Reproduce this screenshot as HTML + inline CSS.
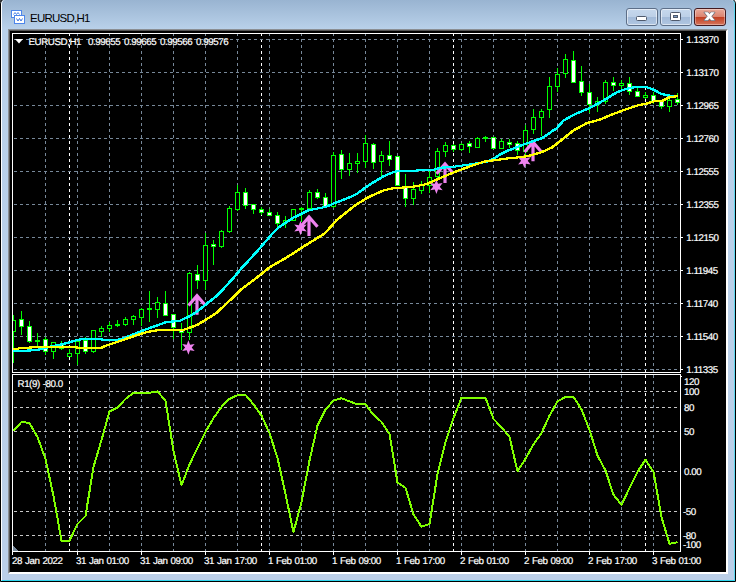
<!DOCTYPE html>
<html><head><meta charset="utf-8"><title>EURUSD,H1</title>
<style>
html,body{margin:0;padding:0;background:#fff;}
body{width:738px;height:582px;position:relative;overflow:hidden;font-family:"Liberation Sans",sans-serif;}
.win{position:absolute;left:0;top:-2px;width:734px;height:582px;border:1px solid #000;border-radius:6px 6px 0 0;
 background:linear-gradient(to bottom,#99b4d1 1px,#b9d1ea 30px,#b9d1ea 40px,#bbcfe8 100%);overflow:hidden;}
.hl{position:absolute;left:0;top:0;width:732px;height:580px;border:1px solid #fff;border-right-color:#5fd8f0;border-bottom-color:#2fd5ee;border-radius:5px 5px 0 0;border-top-color:#c5d6e8;}
.edge{position:absolute;left:8px;top:29px;width:716px;height:541px;border:2px solid;border-color:#8b8f94 #fff #fff #8b8f94;}
.edge2{position:absolute;left:9px;top:30px;width:716px;height:541px;border:1px solid;border-color:#555 #fff #fff #555;}
.title{position:absolute;left:30px;top:10.5px;font-size:11.5px;line-height:14px;color:#000;letter-spacing:-0.75px;white-space:nowrap;}
.t{position:absolute;font-size:9.8px;line-height:11px;color:#fff;white-space:nowrap;letter-spacing:-0.45px;word-spacing:0.7px;-webkit-text-stroke:0.2px #fff;text-rendering:geometricPrecision;}
.btn{position:absolute;top:8px;width:30px;height:16px;border:1px solid #5d6f88;border-radius:3px;
 background:linear-gradient(to bottom,#c6d8ed 0,#bdd0e7 48%,#a3bbd9 52%,#b0c6e1 100%);box-shadow:inset 0 0 0 1px rgba(255,255,255,.55);}
.close{border-color:#431a20;background:linear-gradient(to bottom,#e9aa9a 0,#dc8470 48%,#c23f22 52%,#d5755c 100%);box-shadow:inset 0 0 0 1px rgba(255,255,255,.35);}
</style></head><body>
<div style="position:absolute;left:0;top:0;width:2px;height:2px;background:#444"></div><div class="win"><div class="hl"></div></div>
<div class="edge"></div><div class="edge2"></div>
<svg width="16" height="16" viewBox="0 0 16 16" style="position:absolute;left:10px;top:9px">
<rect x="1.5" y="1.5" width="10" height="7" fill="#fff" stroke="#4d86ea"/>
<path d="M3.5,5.5 L5,3.5 L6.5,5.5 L8,3.5 L9.5,5.5" fill="none" stroke="#4d86ea" stroke-width="1"/>
<rect x="4.5" y="6.5" width="10" height="8" fill="#fff" stroke="#4d86ea"/>
<path d="M6.5,9.5 L8,12 L9.5,9.5 L11,12 L12.5,9.5" fill="none" stroke="#3c74e0" stroke-width="1"/>
</svg>
<div class="title">EURUSD,H1</div>
<div class="btn" style="left:626px"><svg width="30" height="16" style="position:absolute;left:0;top:0"><rect x="9.5" y="7.5" width="10" height="4" rx="1" fill="#fff" stroke="#4f5a6d"/></svg></div>
<div class="btn" style="left:660px"><svg width="30" height="16" style="position:absolute;left:0;top:0"><rect x="9.5" y="3.5" width="10" height="8" rx="1" fill="#fff" stroke="#4f5a6d"/><rect x="12.5" y="6.5" width="4" height="2" fill="#7d9cc4" stroke="#4f5a6d" stroke-width="1"/></svg></div>
<div class="btn close" style="left:694px"><svg width="30" height="16" style="position:absolute;left:0;top:0"><g fill="#fff" stroke="#666b78" stroke-width="1.3" stroke-linejoin="round"><polygon points="9.3,3.3 12.9,3.3 19.7,11.3 16.1,11.3"/><polygon points="16.1,3.3 19.7,3.3 12.9,11.3 9.3,11.3"/></g><g fill="#fff"><polygon points="9.3,3.3 12.9,3.3 19.7,11.3 16.1,11.3"/><polygon points="16.1,3.3 19.7,3.3 12.9,11.3 9.3,11.3"/></g></svg></div>
<svg width="738" height="582" viewBox="0 0 738 582" style="position:absolute;left:0;top:0">
<rect x="10" y="31" width="716" height="541" fill="#000"/>
<g shape-rendering="crispEdges">
<defs><clipPath id="cm"><rect x="13" y="34" width="667" height="338"/></clipPath><clipPath id="cs"><rect x="13" y="375" width="667" height="176"/></clipPath></defs>
<line x1="45.5" y1="34" x2="45.5" y2="372" stroke="#778899" stroke-dasharray="3 3" stroke-dashoffset="1"/>
<line x1="45.5" y1="375" x2="45.5" y2="551" stroke="#778899" stroke-dasharray="3 3" stroke-dashoffset="0"/>
<line x1="77.5" y1="34" x2="77.5" y2="372" stroke="#778899" stroke-dasharray="3 3" stroke-dashoffset="1"/>
<line x1="77.5" y1="375" x2="77.5" y2="551" stroke="#778899" stroke-dasharray="3 3" stroke-dashoffset="0"/>
<line x1="109.5" y1="34" x2="109.5" y2="372" stroke="#778899" stroke-dasharray="3 3" stroke-dashoffset="1"/>
<line x1="109.5" y1="375" x2="109.5" y2="551" stroke="#778899" stroke-dasharray="3 3" stroke-dashoffset="0"/>
<line x1="141.5" y1="34" x2="141.5" y2="372" stroke="#778899" stroke-dasharray="3 3" stroke-dashoffset="1"/>
<line x1="141.5" y1="375" x2="141.5" y2="551" stroke="#778899" stroke-dasharray="3 3" stroke-dashoffset="0"/>
<line x1="173.5" y1="34" x2="173.5" y2="372" stroke="#778899" stroke-dasharray="3 3" stroke-dashoffset="1"/>
<line x1="173.5" y1="375" x2="173.5" y2="551" stroke="#778899" stroke-dasharray="3 3" stroke-dashoffset="0"/>
<line x1="205.5" y1="34" x2="205.5" y2="372" stroke="#778899" stroke-dasharray="3 3" stroke-dashoffset="1"/>
<line x1="205.5" y1="375" x2="205.5" y2="551" stroke="#778899" stroke-dasharray="3 3" stroke-dashoffset="0"/>
<line x1="237.5" y1="34" x2="237.5" y2="372" stroke="#778899" stroke-dasharray="3 3" stroke-dashoffset="1"/>
<line x1="237.5" y1="375" x2="237.5" y2="551" stroke="#778899" stroke-dasharray="3 3" stroke-dashoffset="0"/>
<line x1="269.5" y1="34" x2="269.5" y2="372" stroke="#778899" stroke-dasharray="3 3" stroke-dashoffset="1"/>
<line x1="269.5" y1="375" x2="269.5" y2="551" stroke="#778899" stroke-dasharray="3 3" stroke-dashoffset="0"/>
<line x1="301.5" y1="34" x2="301.5" y2="372" stroke="#778899" stroke-dasharray="3 3" stroke-dashoffset="1"/>
<line x1="301.5" y1="375" x2="301.5" y2="551" stroke="#778899" stroke-dasharray="3 3" stroke-dashoffset="0"/>
<line x1="333.5" y1="34" x2="333.5" y2="372" stroke="#778899" stroke-dasharray="3 3" stroke-dashoffset="1"/>
<line x1="333.5" y1="375" x2="333.5" y2="551" stroke="#778899" stroke-dasharray="3 3" stroke-dashoffset="0"/>
<line x1="365.5" y1="34" x2="365.5" y2="372" stroke="#778899" stroke-dasharray="3 3" stroke-dashoffset="1"/>
<line x1="365.5" y1="375" x2="365.5" y2="551" stroke="#778899" stroke-dasharray="3 3" stroke-dashoffset="0"/>
<line x1="397.5" y1="34" x2="397.5" y2="372" stroke="#778899" stroke-dasharray="3 3" stroke-dashoffset="1"/>
<line x1="397.5" y1="375" x2="397.5" y2="551" stroke="#778899" stroke-dasharray="3 3" stroke-dashoffset="0"/>
<line x1="429.5" y1="34" x2="429.5" y2="372" stroke="#778899" stroke-dasharray="3 3" stroke-dashoffset="1"/>
<line x1="429.5" y1="375" x2="429.5" y2="551" stroke="#778899" stroke-dasharray="3 3" stroke-dashoffset="0"/>
<line x1="461.5" y1="34" x2="461.5" y2="372" stroke="#778899" stroke-dasharray="3 3" stroke-dashoffset="1"/>
<line x1="461.5" y1="375" x2="461.5" y2="551" stroke="#778899" stroke-dasharray="3 3" stroke-dashoffset="0"/>
<line x1="493.5" y1="34" x2="493.5" y2="372" stroke="#778899" stroke-dasharray="3 3" stroke-dashoffset="1"/>
<line x1="493.5" y1="375" x2="493.5" y2="551" stroke="#778899" stroke-dasharray="3 3" stroke-dashoffset="0"/>
<line x1="525.5" y1="34" x2="525.5" y2="372" stroke="#778899" stroke-dasharray="3 3" stroke-dashoffset="1"/>
<line x1="525.5" y1="375" x2="525.5" y2="551" stroke="#778899" stroke-dasharray="3 3" stroke-dashoffset="0"/>
<line x1="557.5" y1="34" x2="557.5" y2="372" stroke="#778899" stroke-dasharray="3 3" stroke-dashoffset="1"/>
<line x1="557.5" y1="375" x2="557.5" y2="551" stroke="#778899" stroke-dasharray="3 3" stroke-dashoffset="0"/>
<line x1="589.5" y1="34" x2="589.5" y2="372" stroke="#778899" stroke-dasharray="3 3" stroke-dashoffset="1"/>
<line x1="589.5" y1="375" x2="589.5" y2="551" stroke="#778899" stroke-dasharray="3 3" stroke-dashoffset="0"/>
<line x1="621.5" y1="34" x2="621.5" y2="372" stroke="#778899" stroke-dasharray="3 3" stroke-dashoffset="1"/>
<line x1="621.5" y1="375" x2="621.5" y2="551" stroke="#778899" stroke-dasharray="3 3" stroke-dashoffset="0"/>
<line x1="653.5" y1="34" x2="653.5" y2="372" stroke="#778899" stroke-dasharray="3 3" stroke-dashoffset="1"/>
<line x1="653.5" y1="375" x2="653.5" y2="551" stroke="#778899" stroke-dasharray="3 3" stroke-dashoffset="0"/>
<line x1="69.5" y1="34" x2="69.5" y2="372" stroke="#fff" stroke-dasharray="3 3" stroke-dashoffset="1"/>
<line x1="69.5" y1="375" x2="69.5" y2="551" stroke="#fff" stroke-dasharray="3 3" stroke-dashoffset="0"/>
<line x1="261.5" y1="34" x2="261.5" y2="372" stroke="#fff" stroke-dasharray="3 3" stroke-dashoffset="1"/>
<line x1="261.5" y1="375" x2="261.5" y2="551" stroke="#fff" stroke-dasharray="3 3" stroke-dashoffset="0"/>
<line x1="453.5" y1="34" x2="453.5" y2="372" stroke="#fff" stroke-dasharray="3 3" stroke-dashoffset="1"/>
<line x1="453.5" y1="375" x2="453.5" y2="551" stroke="#fff" stroke-dasharray="3 3" stroke-dashoffset="0"/>
<line x1="645.5" y1="34" x2="645.5" y2="372" stroke="#fff" stroke-dasharray="3 3" stroke-dashoffset="1"/>
<line x1="645.5" y1="375" x2="645.5" y2="551" stroke="#fff" stroke-dasharray="3 3" stroke-dashoffset="0"/>
<line x1="13" y1="39.5" x2="680" y2="39.5" stroke="#778899" stroke-dasharray="3 3" stroke-dashoffset="5"/>
<line x1="13" y1="72.5" x2="680" y2="72.5" stroke="#778899" stroke-dasharray="3 3" stroke-dashoffset="5"/>
<line x1="13" y1="105.5" x2="680" y2="105.5" stroke="#778899" stroke-dasharray="3 3" stroke-dashoffset="5"/>
<line x1="13" y1="138.5" x2="680" y2="138.5" stroke="#778899" stroke-dasharray="3 3" stroke-dashoffset="5"/>
<line x1="13" y1="171.5" x2="680" y2="171.5" stroke="#778899" stroke-dasharray="3 3" stroke-dashoffset="5"/>
<line x1="13" y1="204.5" x2="680" y2="204.5" stroke="#778899" stroke-dasharray="3 3" stroke-dashoffset="5"/>
<line x1="13" y1="237.5" x2="680" y2="237.5" stroke="#778899" stroke-dasharray="3 3" stroke-dashoffset="5"/>
<line x1="13" y1="270.5" x2="680" y2="270.5" stroke="#778899" stroke-dasharray="3 3" stroke-dashoffset="5"/>
<line x1="13" y1="303.5" x2="680" y2="303.5" stroke="#778899" stroke-dasharray="3 3" stroke-dashoffset="5"/>
<line x1="13" y1="336.5" x2="680" y2="336.5" stroke="#778899" stroke-dasharray="3 3" stroke-dashoffset="5"/>
<line x1="13" y1="369.5" x2="680" y2="369.5" stroke="#778899" stroke-dasharray="3 3" stroke-dashoffset="5"/>
<line x1="13" y1="391.5" x2="680" y2="391.5" stroke="#c8c8c8" stroke-dasharray="3 3" stroke-dashoffset="5"/>
<line x1="13" y1="407.5" x2="680" y2="407.5" stroke="#c8c8c8" stroke-dasharray="3 3" stroke-dashoffset="5"/>
<line x1="13" y1="431.5" x2="680" y2="431.5" stroke="#c8c8c8" stroke-dasharray="3 3" stroke-dashoffset="5"/>
<line x1="13" y1="471.5" x2="680" y2="471.5" stroke="#c8c8c8" stroke-dasharray="3 3" stroke-dashoffset="5"/>
<line x1="13" y1="511.5" x2="680" y2="511.5" stroke="#c8c8c8" stroke-dasharray="3 3" stroke-dashoffset="5"/>
<line x1="13" y1="535.5" x2="680" y2="535.5" stroke="#c8c8c8" stroke-dasharray="3 3" stroke-dashoffset="5"/>
<rect x="12" y="33" width="1" height="340" fill="#fff"/>
<rect x="12" y="33" width="669" height="1" fill="#fff"/>
<rect x="680" y="33" width="1" height="340" fill="#fff"/>
<rect x="12" y="372" width="669" height="1" fill="#fff"/>
<rect x="12" y="374" width="669" height="1" fill="#fff"/>
<rect x="12" y="374" width="1" height="181" fill="#fff"/>
<rect x="680" y="374" width="1" height="178" fill="#fff"/>
<rect x="12" y="551" width="669" height="1" fill="#fff"/>
<rect x="681" y="39" width="2" height="1" fill="#fff"/>
<rect x="681" y="72" width="2" height="1" fill="#fff"/>
<rect x="681" y="105" width="2" height="1" fill="#fff"/>
<rect x="681" y="138" width="2" height="1" fill="#fff"/>
<rect x="681" y="171" width="2" height="1" fill="#fff"/>
<rect x="681" y="204" width="2" height="1" fill="#fff"/>
<rect x="681" y="237" width="2" height="1" fill="#fff"/>
<rect x="681" y="270" width="2" height="1" fill="#fff"/>
<rect x="681" y="303" width="2" height="1" fill="#fff"/>
<rect x="681" y="336" width="2" height="1" fill="#fff"/>
<rect x="681" y="369" width="2" height="1" fill="#fff"/>
<rect x="681" y="376" width="1" height="1" fill="#fff"/>
<rect x="77" y="552" width="1" height="3" fill="#fff"/>
<rect x="141" y="552" width="1" height="3" fill="#fff"/>
<rect x="205" y="552" width="1" height="3" fill="#fff"/>
<rect x="269" y="552" width="1" height="3" fill="#fff"/>
<rect x="333" y="552" width="1" height="3" fill="#fff"/>
<rect x="397" y="552" width="1" height="3" fill="#fff"/>
<rect x="461" y="552" width="1" height="3" fill="#fff"/>
<rect x="525" y="552" width="1" height="3" fill="#fff"/>
<rect x="589" y="552" width="1" height="3" fill="#fff"/>
<rect x="653" y="552" width="1" height="3" fill="#fff"/>
<polygon points="13,546 18,551 13,551" fill="#778899"/>
<g clip-path="url(#cm)">
<rect x="13" y="315" width="1" height="48" fill="#0f0"/>
<rect x="11" y="320" width="5" height="12" fill="#0f0"/>
<rect x="12" y="321" width="3" height="10" fill="#000"/>
<rect x="21" y="311" width="1" height="24" fill="#0f0"/>
<rect x="19" y="319" width="5" height="8" fill="#0f0"/>
<rect x="20" y="320" width="3" height="6" fill="#fff"/>
<rect x="29" y="321" width="1" height="22" fill="#0f0"/>
<rect x="27" y="326" width="5" height="16" fill="#0f0"/>
<rect x="28" y="327" width="3" height="14" fill="#fff"/>
<rect x="37" y="333" width="1" height="15" fill="#0f0"/>
<rect x="35" y="340" width="5" height="2" fill="#0f0"/>
<rect x="45" y="337" width="1" height="18" fill="#0f0"/>
<rect x="43" y="339" width="5" height="13" fill="#0f0"/>
<rect x="44" y="340" width="3" height="11" fill="#fff"/>
<rect x="53" y="342" width="1" height="17" fill="#0f0"/>
<rect x="51" y="342" width="5" height="10" fill="#0f0"/>
<rect x="52" y="343" width="3" height="8" fill="#000"/>
<rect x="61" y="341" width="1" height="9" fill="#0f0"/>
<rect x="59" y="344" width="5" height="5" fill="#0f0"/>
<rect x="60" y="345" width="3" height="3" fill="#fff"/>
<rect x="69" y="349" width="1" height="8" fill="#0f0"/>
<rect x="67" y="353" width="5" height="4" fill="#0f0"/>
<rect x="68" y="354" width="3" height="2" fill="#000"/>
<rect x="77" y="341" width="1" height="24" fill="#0f0"/>
<rect x="75" y="341" width="5" height="13" fill="#0f0"/>
<rect x="76" y="342" width="3" height="11" fill="#000"/>
<rect x="85" y="337" width="1" height="17" fill="#0f0"/>
<rect x="83" y="340" width="5" height="12" fill="#0f0"/>
<rect x="84" y="341" width="3" height="10" fill="#fff"/>
<rect x="93" y="330" width="1" height="23" fill="#0f0"/>
<rect x="91" y="330" width="5" height="22" fill="#0f0"/>
<rect x="92" y="331" width="3" height="20" fill="#000"/>
<rect x="101" y="326" width="1" height="11" fill="#0f0"/>
<rect x="99" y="328" width="5" height="4" fill="#0f0"/>
<rect x="100" y="329" width="3" height="2" fill="#000"/>
<rect x="109" y="322" width="1" height="10" fill="#0f0"/>
<rect x="107" y="325" width="5" height="4" fill="#0f0"/>
<rect x="108" y="326" width="3" height="2" fill="#000"/>
<rect x="117" y="320" width="1" height="7" fill="#0f0"/>
<rect x="115" y="324" width="5" height="2" fill="#0f0"/>
<rect x="125" y="317" width="1" height="9" fill="#0f0"/>
<rect x="123" y="319" width="5" height="6" fill="#0f0"/>
<rect x="124" y="320" width="3" height="4" fill="#000"/>
<rect x="133" y="315" width="1" height="10" fill="#0f0"/>
<rect x="131" y="316" width="5" height="4" fill="#0f0"/>
<rect x="132" y="317" width="3" height="2" fill="#000"/>
<rect x="141" y="308" width="1" height="18" fill="#0f0"/>
<rect x="139" y="309" width="5" height="9" fill="#0f0"/>
<rect x="140" y="310" width="3" height="7" fill="#000"/>
<rect x="149" y="291" width="1" height="31" fill="#0f0"/>
<rect x="147" y="308" width="5" height="2" fill="#0f0"/>
<rect x="157" y="297" width="1" height="21" fill="#0f0"/>
<rect x="155" y="302" width="5" height="8" fill="#0f0"/>
<rect x="156" y="303" width="3" height="6" fill="#000"/>
<rect x="165" y="291" width="1" height="25" fill="#0f0"/>
<rect x="163" y="303" width="5" height="13" fill="#0f0"/>
<rect x="164" y="304" width="3" height="11" fill="#fff"/>
<rect x="173" y="314" width="1" height="25" fill="#0f0"/>
<rect x="171" y="314" width="5" height="14" fill="#0f0"/>
<rect x="172" y="315" width="3" height="12" fill="#fff"/>
<rect x="181" y="323" width="1" height="27" fill="#0f0"/>
<rect x="179" y="329" width="5" height="4" fill="#0f0"/>
<rect x="180" y="330" width="3" height="2" fill="#fff"/>
<rect x="189" y="272" width="1" height="68" fill="#0f0"/>
<rect x="187" y="273" width="5" height="60" fill="#0f0"/>
<rect x="188" y="274" width="3" height="58" fill="#000"/>
<rect x="197" y="265" width="1" height="24" fill="#0f0"/>
<rect x="195" y="274" width="5" height="7" fill="#0f0"/>
<rect x="196" y="275" width="3" height="5" fill="#fff"/>
<rect x="205" y="233" width="1" height="57" fill="#0f0"/>
<rect x="203" y="245" width="5" height="36" fill="#0f0"/>
<rect x="204" y="246" width="3" height="34" fill="#000"/>
<rect x="213" y="240" width="1" height="25" fill="#0f0"/>
<rect x="211" y="244" width="5" height="3" fill="#0f0"/>
<rect x="212" y="245" width="3" height="1" fill="#fff"/>
<rect x="221" y="230" width="1" height="18" fill="#0f0"/>
<rect x="219" y="231" width="5" height="16" fill="#0f0"/>
<rect x="220" y="232" width="3" height="14" fill="#000"/>
<rect x="229" y="206" width="1" height="27" fill="#0f0"/>
<rect x="227" y="208" width="5" height="24" fill="#0f0"/>
<rect x="228" y="209" width="3" height="22" fill="#000"/>
<rect x="237" y="185" width="1" height="26" fill="#0f0"/>
<rect x="235" y="192" width="5" height="18" fill="#0f0"/>
<rect x="236" y="193" width="3" height="16" fill="#000"/>
<rect x="245" y="188" width="1" height="21" fill="#0f0"/>
<rect x="243" y="192" width="5" height="14" fill="#0f0"/>
<rect x="244" y="193" width="3" height="12" fill="#fff"/>
<rect x="253" y="204" width="1" height="10" fill="#0f0"/>
<rect x="251" y="204" width="5" height="6" fill="#0f0"/>
<rect x="252" y="205" width="3" height="4" fill="#fff"/>
<rect x="261" y="207" width="1" height="8" fill="#0f0"/>
<rect x="259" y="209" width="5" height="4" fill="#0f0"/>
<rect x="260" y="210" width="3" height="2" fill="#fff"/>
<rect x="269" y="209" width="1" height="7" fill="#0f0"/>
<rect x="267" y="212" width="5" height="4" fill="#0f0"/>
<rect x="268" y="213" width="3" height="2" fill="#fff"/>
<rect x="277" y="212" width="1" height="16" fill="#0f0"/>
<rect x="275" y="215" width="5" height="9" fill="#0f0"/>
<rect x="276" y="216" width="3" height="7" fill="#fff"/>
<rect x="285" y="216" width="1" height="12" fill="#0f0"/>
<rect x="283" y="220" width="5" height="3" fill="#0f0"/>
<rect x="284" y="221" width="3" height="1" fill="#000"/>
<rect x="293" y="209" width="1" height="12" fill="#0f0"/>
<rect x="291" y="209" width="5" height="12" fill="#0f0"/>
<rect x="292" y="210" width="3" height="10" fill="#000"/>
<rect x="301" y="207" width="1" height="15" fill="#0f0"/>
<rect x="299" y="208" width="5" height="2" fill="#0f0"/>
<rect x="309" y="190" width="1" height="19" fill="#0f0"/>
<rect x="307" y="192" width="5" height="17" fill="#0f0"/>
<rect x="308" y="193" width="3" height="15" fill="#000"/>
<rect x="317" y="189" width="1" height="10" fill="#0f0"/>
<rect x="315" y="192" width="5" height="6" fill="#0f0"/>
<rect x="316" y="193" width="3" height="4" fill="#fff"/>
<rect x="325" y="193" width="1" height="15" fill="#0f0"/>
<rect x="323" y="197" width="5" height="10" fill="#0f0"/>
<rect x="324" y="198" width="3" height="8" fill="#fff"/>
<rect x="333" y="152" width="1" height="56" fill="#0f0"/>
<rect x="331" y="155" width="5" height="52" fill="#0f0"/>
<rect x="332" y="156" width="3" height="50" fill="#000"/>
<rect x="341" y="150" width="1" height="29" fill="#0f0"/>
<rect x="339" y="154" width="5" height="16" fill="#0f0"/>
<rect x="340" y="155" width="3" height="14" fill="#fff"/>
<rect x="349" y="153" width="1" height="23" fill="#0f0"/>
<rect x="347" y="163" width="5" height="7" fill="#0f0"/>
<rect x="348" y="164" width="3" height="5" fill="#000"/>
<rect x="357" y="153" width="1" height="20" fill="#0f0"/>
<rect x="355" y="161" width="5" height="3" fill="#0f0"/>
<rect x="356" y="162" width="3" height="1" fill="#000"/>
<rect x="365" y="135" width="1" height="33" fill="#0f0"/>
<rect x="363" y="143" width="5" height="19" fill="#0f0"/>
<rect x="364" y="144" width="3" height="17" fill="#000"/>
<rect x="373" y="143" width="1" height="26" fill="#0f0"/>
<rect x="371" y="144" width="5" height="19" fill="#0f0"/>
<rect x="372" y="145" width="3" height="17" fill="#fff"/>
<rect x="381" y="151" width="1" height="25" fill="#0f0"/>
<rect x="379" y="155" width="5" height="7" fill="#0f0"/>
<rect x="380" y="156" width="3" height="5" fill="#000"/>
<rect x="389" y="141" width="1" height="25" fill="#0f0"/>
<rect x="387" y="155" width="5" height="5" fill="#0f0"/>
<rect x="388" y="156" width="3" height="3" fill="#fff"/>
<rect x="397" y="156" width="1" height="30" fill="#0f0"/>
<rect x="395" y="156" width="5" height="30" fill="#0f0"/>
<rect x="396" y="157" width="3" height="28" fill="#fff"/>
<rect x="405" y="174" width="1" height="33" fill="#0f0"/>
<rect x="403" y="186" width="5" height="13" fill="#0f0"/>
<rect x="404" y="187" width="3" height="11" fill="#fff"/>
<rect x="413" y="182" width="1" height="23" fill="#0f0"/>
<rect x="411" y="189" width="5" height="10" fill="#0f0"/>
<rect x="412" y="190" width="3" height="8" fill="#000"/>
<rect x="421" y="181" width="1" height="13" fill="#0f0"/>
<rect x="419" y="185" width="5" height="6" fill="#0f0"/>
<rect x="420" y="186" width="3" height="4" fill="#000"/>
<rect x="429" y="169" width="1" height="24" fill="#0f0"/>
<rect x="427" y="177" width="5" height="9" fill="#0f0"/>
<rect x="428" y="178" width="3" height="7" fill="#000"/>
<rect x="437" y="148" width="1" height="30" fill="#0f0"/>
<rect x="435" y="151" width="5" height="26" fill="#0f0"/>
<rect x="436" y="152" width="3" height="24" fill="#000"/>
<rect x="445" y="142" width="1" height="15" fill="#0f0"/>
<rect x="443" y="145" width="5" height="7" fill="#0f0"/>
<rect x="444" y="146" width="3" height="5" fill="#000"/>
<rect x="453" y="144" width="1" height="8" fill="#0f0"/>
<rect x="451" y="145" width="5" height="5" fill="#0f0"/>
<rect x="452" y="146" width="3" height="3" fill="#fff"/>
<rect x="461" y="143" width="1" height="8" fill="#0f0"/>
<rect x="459" y="144" width="5" height="6" fill="#0f0"/>
<rect x="460" y="145" width="3" height="4" fill="#000"/>
<rect x="469" y="141" width="1" height="12" fill="#0f0"/>
<rect x="467" y="143" width="5" height="4" fill="#0f0"/>
<rect x="468" y="144" width="3" height="2" fill="#fff"/>
<rect x="477" y="137" width="1" height="11" fill="#0f0"/>
<rect x="475" y="138" width="5" height="10" fill="#0f0"/>
<rect x="476" y="139" width="3" height="8" fill="#000"/>
<rect x="485" y="136" width="1" height="6" fill="#0f0"/>
<rect x="483" y="137" width="5" height="2" fill="#0f0"/>
<rect x="493" y="137" width="1" height="12" fill="#0f0"/>
<rect x="491" y="137" width="5" height="12" fill="#0f0"/>
<rect x="492" y="138" width="3" height="10" fill="#fff"/>
<rect x="501" y="139" width="1" height="10" fill="#0f0"/>
<rect x="499" y="141" width="5" height="8" fill="#0f0"/>
<rect x="500" y="142" width="3" height="6" fill="#000"/>
<rect x="509" y="139" width="1" height="9" fill="#0f0"/>
<rect x="507" y="142" width="5" height="3" fill="#0f0"/>
<rect x="508" y="143" width="3" height="1" fill="#fff"/>
<rect x="517" y="141" width="1" height="14" fill="#0f0"/>
<rect x="515" y="143" width="5" height="8" fill="#0f0"/>
<rect x="516" y="144" width="3" height="6" fill="#fff"/>
<rect x="525" y="125" width="1" height="30" fill="#0f0"/>
<rect x="523" y="130" width="5" height="22" fill="#0f0"/>
<rect x="524" y="131" width="3" height="20" fill="#000"/>
<rect x="533" y="109" width="1" height="25" fill="#0f0"/>
<rect x="531" y="117" width="5" height="13" fill="#0f0"/>
<rect x="532" y="118" width="3" height="11" fill="#000"/>
<rect x="541" y="109" width="1" height="27" fill="#0f0"/>
<rect x="539" y="111" width="5" height="7" fill="#0f0"/>
<rect x="540" y="112" width="3" height="5" fill="#000"/>
<rect x="549" y="77" width="1" height="41" fill="#0f0"/>
<rect x="547" y="86" width="5" height="24" fill="#0f0"/>
<rect x="548" y="87" width="3" height="22" fill="#000"/>
<rect x="557" y="68" width="1" height="24" fill="#0f0"/>
<rect x="555" y="74" width="5" height="13" fill="#0f0"/>
<rect x="556" y="75" width="3" height="11" fill="#000"/>
<rect x="565" y="54" width="1" height="24" fill="#0f0"/>
<rect x="563" y="59" width="5" height="15" fill="#0f0"/>
<rect x="564" y="60" width="3" height="13" fill="#000"/>
<rect x="573" y="51" width="1" height="32" fill="#0f0"/>
<rect x="571" y="60" width="5" height="23" fill="#0f0"/>
<rect x="572" y="61" width="3" height="21" fill="#fff"/>
<rect x="581" y="66" width="1" height="30" fill="#0f0"/>
<rect x="579" y="81" width="5" height="12" fill="#0f0"/>
<rect x="580" y="82" width="3" height="10" fill="#fff"/>
<rect x="589" y="84" width="1" height="29" fill="#0f0"/>
<rect x="587" y="92" width="5" height="13" fill="#0f0"/>
<rect x="588" y="93" width="3" height="11" fill="#fff"/>
<rect x="597" y="97" width="1" height="15" fill="#0f0"/>
<rect x="595" y="101" width="5" height="4" fill="#0f0"/>
<rect x="596" y="102" width="3" height="2" fill="#000"/>
<rect x="605" y="80" width="1" height="24" fill="#0f0"/>
<rect x="603" y="82" width="5" height="20" fill="#0f0"/>
<rect x="604" y="83" width="3" height="18" fill="#000"/>
<rect x="613" y="77" width="1" height="14" fill="#0f0"/>
<rect x="611" y="82" width="5" height="4" fill="#0f0"/>
<rect x="612" y="83" width="3" height="2" fill="#fff"/>
<rect x="621" y="80" width="1" height="10" fill="#0f0"/>
<rect x="619" y="83" width="5" height="3" fill="#0f0"/>
<rect x="620" y="84" width="3" height="1" fill="#000"/>
<rect x="629" y="77" width="1" height="18" fill="#0f0"/>
<rect x="627" y="83" width="5" height="9" fill="#0f0"/>
<rect x="628" y="84" width="3" height="7" fill="#fff"/>
<rect x="637" y="87" width="1" height="10" fill="#0f0"/>
<rect x="635" y="91" width="5" height="6" fill="#0f0"/>
<rect x="636" y="92" width="3" height="4" fill="#fff"/>
<rect x="645" y="92" width="1" height="7" fill="#0f0"/>
<rect x="643" y="95" width="5" height="3" fill="#0f0"/>
<rect x="644" y="96" width="3" height="1" fill="#000"/>
<rect x="653" y="92" width="1" height="12" fill="#0f0"/>
<rect x="651" y="95" width="5" height="7" fill="#0f0"/>
<rect x="652" y="96" width="3" height="5" fill="#fff"/>
<rect x="661" y="101" width="1" height="8" fill="#0f0"/>
<rect x="659" y="101" width="5" height="6" fill="#0f0"/>
<rect x="660" y="102" width="3" height="4" fill="#fff"/>
<rect x="669" y="97" width="1" height="15" fill="#0f0"/>
<rect x="667" y="100" width="5" height="7" fill="#0f0"/>
<rect x="668" y="101" width="3" height="5" fill="#000"/>
<rect x="677" y="93" width="1" height="12" fill="#0f0"/>
<rect x="675" y="99" width="5" height="4" fill="#0f0"/>
<rect x="676" y="100" width="3" height="2" fill="#fff"/>
</g>
</g>
<path d="M188.5,305.5 L197.0,295.8 L205.5,305.5 M197.0,296.0 L197.0,314.8" fill="none" stroke="#ee82ee" stroke-width="3.2" stroke-linejoin="miter"/>
<path d="M300.5,226.7 L309.0,217.0 L317.5,226.7 M309.0,217.2 L309.0,236.0" fill="none" stroke="#ee82ee" stroke-width="3.2" stroke-linejoin="miter"/>
<path d="M436.5,173.7 L445.0,164.0 L453.5,173.7 M445.0,164.2 L445.0,183.0" fill="none" stroke="#ee82ee" stroke-width="3.2" stroke-linejoin="miter"/>
<path d="M524.5,152 L533.0,142.3 L541.5,152 M533.0,142.5 L533.0,161.3" fill="none" stroke="#ee82ee" stroke-width="3.2" stroke-linejoin="miter"/>
<polygon points="188.40,340.30 190.05,344.64 194.64,343.90 191.70,347.50 194.64,351.10 190.05,350.36 188.40,354.70 186.75,350.36 182.16,351.10 185.10,347.50 182.16,343.90 186.75,344.64" fill="#ee82ee"/>
<polygon points="300.50,220.80 302.15,225.14 306.74,224.40 303.80,228.00 306.74,231.60 302.15,230.86 300.50,235.20 298.85,230.86 294.26,231.60 297.20,228.00 294.26,224.40 298.85,225.14" fill="#ee82ee"/>
<polygon points="436.40,179.50 438.05,183.84 442.64,183.10 439.70,186.70 442.64,190.30 438.05,189.56 436.40,193.90 434.75,189.56 430.16,190.30 433.10,186.70 430.16,183.10 434.75,183.84" fill="#ee82ee"/>
<polygon points="524.40,153.60 526.05,157.94 530.64,157.20 527.70,160.80 530.64,164.40 526.05,163.66 524.40,168.00 522.75,163.66 518.16,164.40 521.10,160.80 518.16,157.20 522.75,157.94" fill="#ee82ee"/>
<g shape-rendering="crispEdges">
<g clip-path="url(#cm)">
<polyline points="12.5,350.5 29.5,350.0 37.5,349.3 44.5,347.5 52.5,345.5 60.5,344.0 68.5,342.0 76.5,339.5 84.5,338.3 95.5,338.6 101.0,338.6 102.0,339.3 116.5,339.3 121.5,338.4 126.5,336.5 136.7,332.4 147.0,328.3 157.4,324.7 165.6,321.6 179.5,320.3 188.5,316.0 196.5,311.2 206.5,303.0 217.3,294.5 225.1,286.0 234.0,276.2 240.3,268.5 255.1,252.5 271.5,233.6 277.7,227.4 292.1,217.6 307.6,209.9 325.1,206.4 335.4,202.1 347.5,197.5 356.2,193.5 366.2,186.1 372.8,181.9 382.8,175.9 391.5,172.1 396.5,170.7 402.8,170.6 416.0,170.3 417.5,169.2 432.3,169.5 440.9,167.1 453.3,166.7 455.5,165.9 469.4,164.0 486.1,161.2 492.6,158.5 499.1,154.3 507.4,150.1 514.9,147.3 523.5,143.8 541.2,137.8 552.0,130.5 556.2,127.8 562.8,120.2 572.8,114.5 589.5,107.3 602.8,100.2 616.2,91.8 626.2,88.2 636.2,86.3 643.9,86.1 651.4,88.4 660.2,93.1 666.5,94.9 672.7,95.3 677.1,95.3" fill="none" stroke="#00ffff" stroke-width="1.1" stroke-linejoin="round"/><polyline points="13.5,350.5 30.5,350.0 38.5,349.3 45.5,347.5 53.5,345.5 61.5,344.0 69.5,342.0 77.5,339.5 85.5,338.3 96.5,338.6 102.0,338.6 103.0,339.3 117.5,339.3 122.5,338.4 127.5,336.5 137.7,332.4 148.0,328.3 158.4,324.7 166.6,321.6 180.5,320.3 189.5,316.0 197.5,311.2 207.5,303.0 218.3,294.5 226.1,286.0 235.0,276.2 241.3,268.5 256.1,252.5 272.5,233.6 278.7,227.4 293.1,217.6 308.6,209.9 326.1,206.4 336.4,202.1 348.5,197.5 357.2,193.5 367.2,186.1 373.8,181.9 383.8,175.9 392.5,172.1 397.5,170.7 403.8,170.6 417.0,170.3 418.5,169.2 433.3,169.5 441.9,167.1 454.3,166.7 456.5,165.9 470.4,164.0 487.1,161.2 493.6,158.5 500.1,154.3 508.4,150.1 515.9,147.3 524.5,143.8 542.2,137.8 553.0,130.5 557.2,127.8 563.8,120.2 573.8,114.5 590.5,107.3 603.8,100.2 617.2,91.8 627.2,88.2 637.2,86.3 644.9,86.1 652.4,88.4 661.2,93.1 667.5,94.9 673.7,95.3 678.1,95.3" fill="none" stroke="#00ffff" stroke-width="1.1" stroke-linejoin="round"/><polyline points="12.5,351.5 29.5,351.0 37.5,350.3 44.5,348.5 52.5,346.5 60.5,345.0 68.5,343.0 76.5,340.5 84.5,339.3 95.5,339.6 101.0,339.6 102.0,340.3 116.5,340.3 121.5,339.4 126.5,337.5 136.7,333.4 147.0,329.3 157.4,325.7 165.6,322.6 179.5,321.3 188.5,317.0 196.5,312.2 206.5,304.0 217.3,295.5 225.1,287.0 234.0,277.2 240.3,269.5 255.1,253.5 271.5,234.6 277.7,228.4 292.1,218.6 307.6,210.9 325.1,207.4 335.4,203.1 347.5,198.5 356.2,194.5 366.2,187.1 372.8,182.9 382.8,176.9 391.5,173.1 396.5,171.7 402.8,171.6 416.0,171.3 417.5,170.2 432.3,170.5 440.9,168.1 453.3,167.7 455.5,166.9 469.4,165.0 486.1,162.2 492.6,159.5 499.1,155.3 507.4,151.1 514.9,148.3 523.5,144.8 541.2,138.8 552.0,131.5 556.2,128.8 562.8,121.2 572.8,115.5 589.5,108.3 602.8,101.2 616.2,92.8 626.2,89.2 636.2,87.3 643.9,87.1 651.4,89.4 660.2,94.1 666.5,95.9 672.7,96.3 677.1,96.3" fill="none" stroke="#00ffff" stroke-width="1.1" stroke-linejoin="round"/><polyline points="13.5,351.5 30.5,351.0 38.5,350.3 45.5,348.5 53.5,346.5 61.5,345.0 69.5,343.0 77.5,340.5 85.5,339.3 96.5,339.6 102.0,339.6 103.0,340.3 117.5,340.3 122.5,339.4 127.5,337.5 137.7,333.4 148.0,329.3 158.4,325.7 166.6,322.6 180.5,321.3 189.5,317.0 197.5,312.2 207.5,304.0 218.3,295.5 226.1,287.0 235.0,277.2 241.3,269.5 256.1,253.5 272.5,234.6 278.7,228.4 293.1,218.6 308.6,210.9 326.1,207.4 336.4,203.1 348.5,198.5 357.2,194.5 367.2,187.1 373.8,182.9 383.8,176.9 392.5,173.1 397.5,171.7 403.8,171.6 417.0,171.3 418.5,170.2 433.3,170.5 441.9,168.1 454.3,167.7 456.5,166.9 470.4,165.0 487.1,162.2 493.6,159.5 500.1,155.3 508.4,151.1 515.9,148.3 524.5,144.8 542.2,138.8 553.0,131.5 557.2,128.8 563.8,121.2 573.8,115.5 590.5,108.3 603.8,101.2 617.2,92.8 627.2,89.2 637.2,87.3 644.9,87.1 652.4,89.4 661.2,94.1 667.5,95.9 673.7,96.3 678.1,96.3" fill="none" stroke="#00ffff" stroke-width="1.1" stroke-linejoin="round"/>
<polyline points="12.5,349.1 20.5,347.5 36.5,346.7 75.5,346.3 77.5,347.5 100.5,347.5 104.8,345.5 116.1,341.7 126.4,338.1 136.7,334.5 147.0,331.4 157.4,329.7 183.2,329.4 196.5,324.5 206.5,318.5 216.5,312.0 224.5,304.5 233.2,296.2 239.5,289.8 254.5,278.5 269.5,266.5 286.2,257.0 302.8,246.2 324.5,232.8 336.2,219.5 352.8,206.2 366.2,197.5 382.8,190.0 392.8,187.7 407.8,186.7 412.5,186.2 425.8,183.7 439.2,177.8 453.3,171.8 455.5,171.0 469.4,165.9 483.3,161.2 492.6,159.9 509.3,157.7 518.5,156.8 528.0,155.5 541.2,151.6 551.5,147.0 556.2,143.3 572.8,130.0 586.2,122.7 599.5,119.0 612.8,113.5 626.2,108.5 639.5,104.3 645.1,103.4 653.9,100.7 661.5,100.5 669.0,96.8 677.1,95.7" fill="none" stroke="#ffff00" stroke-width="1.1" stroke-linejoin="round"/><polyline points="13.5,349.1 21.5,347.5 37.5,346.7 76.5,346.3 78.5,347.5 101.5,347.5 105.8,345.5 117.1,341.7 127.4,338.1 137.7,334.5 148.0,331.4 158.4,329.7 184.2,329.4 197.5,324.5 207.5,318.5 217.5,312.0 225.5,304.5 234.2,296.2 240.5,289.8 255.5,278.5 270.5,266.5 287.2,257.0 303.8,246.2 325.5,232.8 337.2,219.5 353.8,206.2 367.2,197.5 383.8,190.0 393.8,187.7 408.8,186.7 413.5,186.2 426.8,183.7 440.2,177.8 454.3,171.8 456.5,171.0 470.4,165.9 484.3,161.2 493.6,159.9 510.3,157.7 519.5,156.8 529.0,155.5 542.2,151.6 552.5,147.0 557.2,143.3 573.8,130.0 587.2,122.7 600.5,119.0 613.8,113.5 627.2,108.5 640.5,104.3 646.1,103.4 654.9,100.7 662.5,100.5 670.0,96.8 678.1,95.7" fill="none" stroke="#ffff00" stroke-width="1.1" stroke-linejoin="round"/><polyline points="12.5,350.1 20.5,348.5 36.5,347.7 75.5,347.3 77.5,348.5 100.5,348.5 104.8,346.5 116.1,342.7 126.4,339.1 136.7,335.5 147.0,332.4 157.4,330.7 183.2,330.4 196.5,325.5 206.5,319.5 216.5,313.0 224.5,305.5 233.2,297.2 239.5,290.8 254.5,279.5 269.5,267.5 286.2,258.0 302.8,247.2 324.5,233.8 336.2,220.5 352.8,207.2 366.2,198.5 382.8,191.0 392.8,188.7 407.8,187.7 412.5,187.2 425.8,184.7 439.2,178.8 453.3,172.8 455.5,172.0 469.4,166.9 483.3,162.2 492.6,160.9 509.3,158.7 518.5,157.8 528.0,156.5 541.2,152.6 551.5,148.0 556.2,144.3 572.8,131.0 586.2,123.7 599.5,120.0 612.8,114.5 626.2,109.5 639.5,105.3 645.1,104.4 653.9,101.7 661.5,101.5 669.0,97.8 677.1,96.7" fill="none" stroke="#ffff00" stroke-width="1.1" stroke-linejoin="round"/><polyline points="13.5,350.1 21.5,348.5 37.5,347.7 76.5,347.3 78.5,348.5 101.5,348.5 105.8,346.5 117.1,342.7 127.4,339.1 137.7,335.5 148.0,332.4 158.4,330.7 184.2,330.4 197.5,325.5 207.5,319.5 217.5,313.0 225.5,305.5 234.2,297.2 240.5,290.8 255.5,279.5 270.5,267.5 287.2,258.0 303.8,247.2 325.5,233.8 337.2,220.5 353.8,207.2 367.2,198.5 383.8,191.0 393.8,188.7 408.8,187.7 413.5,187.2 426.8,184.7 440.2,178.8 454.3,172.8 456.5,172.0 470.4,166.9 484.3,162.2 493.6,160.9 510.3,158.7 519.5,157.8 529.0,156.5 542.2,152.6 552.5,148.0 557.2,144.3 573.8,131.0 587.2,123.7 600.5,120.0 613.8,114.5 627.2,109.5 640.5,105.3 646.1,104.4 654.9,101.7 662.5,101.5 670.0,97.8 678.1,96.7" fill="none" stroke="#ffff00" stroke-width="1.1" stroke-linejoin="round"/>
</g>
<g clip-path="url(#cs)">
<polyline points="13.5,430.6 21.5,422.0 29.5,423.0 37.5,437.0 45.5,459.0 53.5,496.0 61.5,540.6 69.5,540.6 77.5,524.0 85.5,516.0 93.5,467.0 101.5,440.0 109.5,411.5 117.5,407.5 125.5,399.0 133.5,393.0 141.5,392.7 149.5,392.7 157.5,391.5 165.5,400.7 173.5,451.0 181.5,485.3 189.5,464.5 197.5,448.0 205.5,431.9 213.5,418.1 221.5,406.9 229.5,398.9 237.5,395.2 245.5,394.9 253.5,404.4 261.5,415.6 269.5,433.1 277.5,458.0 285.5,494.0 293.5,532.2 301.5,502.0 309.5,460.5 317.5,425.6 325.5,409.4 333.5,400.7 341.5,398.2 349.5,401.4 357.5,404.4 365.5,404.4 373.5,414.9 381.5,421.9 389.5,433.8 397.5,482.5 405.5,487.8 413.5,514.5 421.5,526.8 429.5,524.1 437.5,474.2 445.5,441.8 453.5,418.1 461.5,397.7 469.5,397.7 477.5,397.7 485.5,397.7 493.5,418.9 501.5,427.4 509.5,436.8 517.5,471.3 525.5,458.8 533.5,444.3 541.5,433.1 549.5,415.6 557.5,401.4 565.5,396.9 573.5,396.9 581.5,409.4 589.5,429.9 597.5,455.5 605.5,470.5 613.5,494.7 621.5,504.9 629.5,488.0 637.5,471.8 645.5,459.8 653.5,471.8 661.5,517.0 669.5,543.9 677.5,542.1" fill="none" stroke="#7fff00" stroke-width="2" stroke-linejoin="round"/>
</g>
</g>
</svg>
<svg width="8" height="5" style="position:absolute;left:15px;top:39px"><polygon points="0,0 8,0 4,4.6" fill="#fff"/></svg>
<div class="t" style="left:686.3px;top:35px;">1.13370</div>
<div class="t" style="left:686.3px;top:68px;">1.13170</div>
<div class="t" style="left:686.3px;top:101px;">1.12965</div>
<div class="t" style="left:686.3px;top:134px;">1.12760</div>
<div class="t" style="left:686.3px;top:167px;">1.12555</div>
<div class="t" style="left:686.3px;top:200px;">1.12355</div>
<div class="t" style="left:686.3px;top:233px;">1.12150</div>
<div class="t" style="left:686.3px;top:266px;">1.11945</div>
<div class="t" style="left:686.3px;top:299px;">1.11740</div>
<div class="t" style="left:686.3px;top:332px;">1.11540</div>
<div class="t" style="left:686.3px;top:365px;">1.11335</div>
<div class="t" style="left:684px;top:377.0px;">120</div>
<div class="t" style="left:684px;top:387.0px;">100</div>
<div class="t" style="left:684px;top:403.0px;">80</div>
<div class="t" style="left:684px;top:427.0px;">50</div>
<div class="t" style="left:684px;top:467.0px;">0.00</div>
<div class="t" style="left:683px;top:507.0px;">-50</div>
<div class="t" style="left:683px;top:531.0px;">-80</div>
<div class="t" style="left:683px;top:540.0px;">-100</div>
<div class="t" style="left:12px;top:556px;">28 Jan 2022</div>
<div class="t" style="left:76px;top:556px;">31 Jan 01:00</div>
<div class="t" style="left:140px;top:556px;">31 Jan 09:00</div>
<div class="t" style="left:204px;top:556px;">31 Jan 17:00</div>
<div class="t" style="left:268px;top:556px;">1 Feb 01:00</div>
<div class="t" style="left:332px;top:556px;">1 Feb 09:00</div>
<div class="t" style="left:396px;top:556px;">1 Feb 17:00</div>
<div class="t" style="left:460px;top:556px;">2 Feb 01:00</div>
<div class="t" style="left:524px;top:556px;">2 Feb 09:00</div>
<div class="t" style="left:588px;top:556px;">2 Feb 17:00</div>
<div class="t" style="left:652px;top:556px;">3 Feb 01:00</div>
<div class="t" style="left:28.5px;top:37px;">EURUSD,H1</div>
<div class="t" style="left:88px;top:37px;">0.99655</div>
<div class="t" style="left:124px;top:37px;">0.99665</div>
<div class="t" style="left:160px;top:37px;">0.99566</div>
<div class="t" style="left:196px;top:37px;">0.99576</div>
<div class="t" style="left:17.5px;top:379px;">R1(9) -80.0</div>
</body></html>
